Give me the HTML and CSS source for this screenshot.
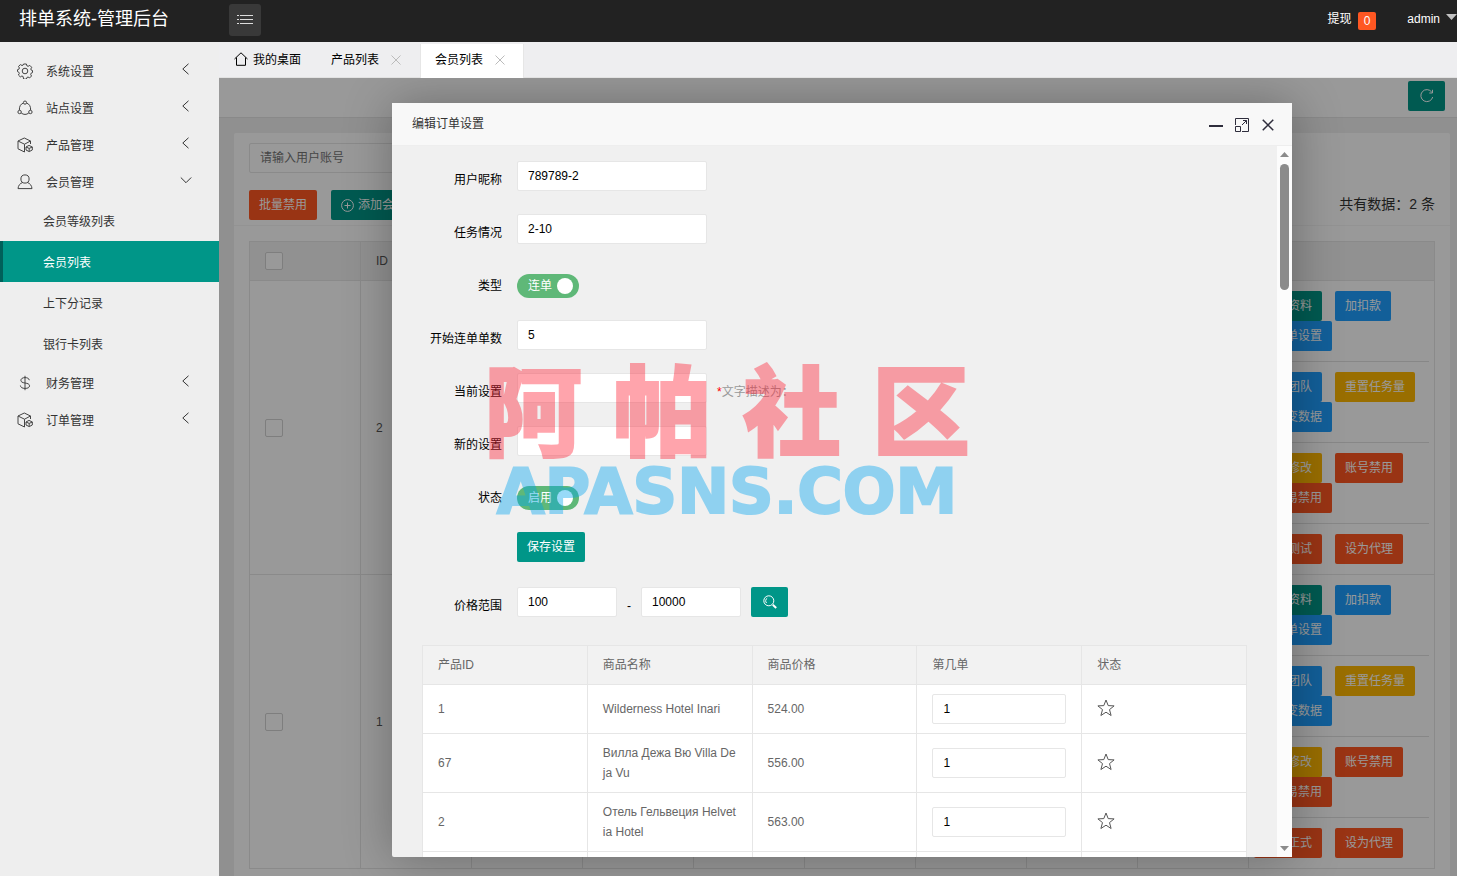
FILE: index.html
```html
<!DOCTYPE html>
<html lang="zh-CN">
<head>
<meta charset="utf-8">
<title>排单系统-管理后台</title>
<link rel="stylesheet" href="styles.css">
</head>
<body>
<svg class="sprite" aria-hidden="true">
  <symbol id="i-gear" viewBox="0 0 16 16"><path d="M6.6 1h2.8l.5 1.8 1.2.5 1.7-.9 1.9 1.9-.9 1.7.4 1.1 1.3.4v2.1l-1.4.6-.4 1.2.8 1.6-1.8 1.9-1.7-.9-1.1.5-.5 1.6H6.6L6.100 13.500 4.900 13l-1.600.9-1.900-1.900.9-1.600-.5-1.200L.5 8.600V6.700l1.400-.5.5-1.200-.9-1.600L3.400 1.600 5 2.500l1.100-.4z"/><circle cx="8" cy="8" r="2.800"/></symbol>
  <symbol id="i-site" viewBox="0 0 16 16"><circle cx="8" cy="2.600" r="1.600"/><circle cx="2.600" cy="12" r="1.700"/><circle cx="13.400" cy="12" r="1.700"/><path d="M6.300 3.100C3.600 4 2.100 6.600 2.400 10.200M9.700 3.100c2.700.9 4.200 3.500 3.900 7.100M4.200 13c2.300 1.900 5.300 1.900 7.600 0"/></symbol>
  <symbol id="i-box" viewBox="0 0 16 16"><path d="M7.500 15 1 11.800V4L7.300 1 13.500 4v3M1 4l6.500 3.200L13.500 4M7.500 7.200V15M9 10l3-1.600 3.300 1.600v3L12.200 14.600 9 13zM9 10l3.200 1.400L15.300 10M12.200 11.400v3"/></symbol>
  <symbol id="i-user" viewBox="0 0 16 16"><circle cx="8" cy="5" r="4.100"/><path d="M5.600 8.500C3 9.400 1.200 11.600 1 14.600h14c-.2-3-2-5.200-4.600-6.100"/></symbol>
  <symbol id="i-dollar" viewBox="0 0 16 16"><path d="M12.300 5.200C12 3.400 10.400 2.600 8 2.600S3.900 3.600 3.900 5.300 5.300 7.600 8 8s4.500 1 4.500 2.800S10.800 13.400 8 13.400s-4.400-1-4.600-2.900M8 .8v14.400"/></symbol>
  <symbol id="i-left" viewBox="0 0 12 12"><path d="M8.500.8 2.800 6l5.700 5.200"/></symbol>
  <symbol id="i-down" viewBox="0 0 12 12"><path d="M.8 3.500 6 8.700l5.200-5.200"/></symbol>
  <symbol id="i-x" viewBox="0 0 12 12"><path d="m1.500 1.500 9 9m0-9-9 9"/></symbol>
  <symbol id="i-star" viewBox="0 0 18 18"><path d="m9 1 2.200 5.600 5.900.3-4.600 3.700 1.600 5.900L9 13.200l-5.100 3.300 1.600-5.900L.9 6.900l5.900-.3z"/></symbol>
</svg>

<header class="topbar">
  <h1 class="brand">排单系统-管理后台</h1>
  <button class="menu-toggle" type="button" aria-label="菜单">
    <svg width="16" height="12" viewBox="0 0 16 12"><path d="M0 1.500h2M3 1.500h13M0 5.500h2M3 5.500h13M0 9.500h2M3 9.500h13"/></svg>
  </button>
  <div class="top-right">
    <a class="top-link" href="#">提现 <span class="badge">0</span></a>
    <a class="top-link user" href="#">admin <span class="caret"></span></a>
  </div>
</header>

<div class="shell">
  <nav class="sidebar">
    <a class="nav-item" href="#"><svg class="ico"><use href="#i-gear"/></svg><span>系统设置</span><svg class="arrow"><use href="#i-left"/></svg></a>
    <a class="nav-item" href="#"><svg class="ico"><use href="#i-site"/></svg><span>站点设置</span><svg class="arrow"><use href="#i-left"/></svg></a>
    <a class="nav-item" href="#"><svg class="ico"><use href="#i-box"/></svg><span>产品管理</span><svg class="arrow"><use href="#i-left"/></svg></a>
    <a class="nav-item" href="#"><svg class="ico"><use href="#i-user"/></svg><span>会员管理</span><svg class="arrow"><use href="#i-down"/></svg></a>
    <a class="sub-item" href="#">会员等级列表</a>
    <a class="sub-item active" href="#">会员列表</a>
    <a class="sub-item" href="#">上下分记录</a>
    <a class="sub-item" href="#">银行卡列表</a>
    <a class="nav-item" href="#"><svg class="ico"><use href="#i-dollar"/></svg><span>财务管理</span><svg class="arrow"><use href="#i-left"/></svg></a>
    <a class="nav-item" href="#"><svg class="ico"><use href="#i-box"/></svg><span>订单管理</span><svg class="arrow"><use href="#i-left"/></svg></a>
  </nav>

  <main class="main">
    <div class="tabs">
      <a class="tab" href="#"><svg class="home" viewBox="0 0 14 14"><path d="M.5 7 7 .8 13.500 7M2.500 5.500v7.800h9V5.500"/></svg>我的桌面</a>
      <a class="tab" href="#">产品列表<svg class="tab-x"><use href="#i-x"/></svg></a>
      <a class="tab current" href="#">会员列表<svg class="tab-x"><use href="#i-x"/></svg></a>
    </div>

    <div class="stage">
      <div class="page">
        <div class="crumbs">
          <button class="btn icon-btn" type="button" aria-label="刷新"><svg width="14" height="14" viewBox="0 0 14 14"><path d="M12.700 8A6 6 0 1 1 11.800 3.200M12.500.8v3.200H9.300"/></svg></button>
        </div>
        <div class="card">
          <div class="search"><input class="field" type="text" placeholder="请输入用户账号" aria-label="用户账号"></div>
          <div class="toolbar">
            <button class="btn red" type="button">批量禁用</button>
            <button class="btn add" type="button"><svg width="13" height="13" viewBox="0 0 13 13"><circle cx="6.500" cy="6.500" r="5.900"/><path d="M6.500 3.500v6M3.500 6.500h6"/></svg>添加会员</button>
            <span class="total">共有数据：2 条</span>
          </div>
          <div class="table-wrap">
            <table class="grid members">
              <colgroup><col span="9" class="c-data"><col class="c-ops"></colgroup>
              <thead><tr><th><input type="checkbox" aria-label="全选"></th><th>ID</th><th></th><th></th><th></th><th></th><th></th><th></th><th></th><th></th></tr></thead>
              <tbody>
                <tr><td><input type="checkbox" aria-label="选择 2"></td><td>2</td><td></td><td></td><td></td><td></td><td></td><td></td><td></td>
                  <td class="ops">
                    <div class="line"><button class="btn" type="button">基本资料</button><button class="btn blue" type="button">加扣款</button></div>
                    <div class="line second"><button class="btn blue" type="button">订单设置</button></div><hr>
                    <div class="line"><button class="btn blue" type="button">查看团队</button><button class="btn amber" type="button">重置任务量</button></div>
                    <div class="line second"><button class="btn blue" type="button">账变数据</button></div><hr>
                    <div class="line"><button class="btn amber" type="button">资料修改</button><button class="btn red" type="button">账号禁用</button></div>
                    <div class="line second"><button class="btn red" type="button">交易禁用</button></div><hr>
                    <div class="line"><button class="btn red" type="button">设为测试</button><button class="btn red" type="button">设为代理</button></div>
                  </td></tr>
                <tr><td><input type="checkbox" aria-label="选择 1"></td><td>1</td><td></td><td></td><td></td><td></td><td></td><td></td><td></td>
                  <td class="ops">
                    <div class="line"><button class="btn" type="button">基本资料</button><button class="btn blue" type="button">加扣款</button></div>
                    <div class="line second"><button class="btn blue" type="button">订单设置</button></div><hr>
                    <div class="line"><button class="btn blue" type="button">查看团队</button><button class="btn amber" type="button">重置任务量</button></div>
                    <div class="line second"><button class="btn blue" type="button">账变数据</button></div><hr>
                    <div class="line"><button class="btn amber" type="button">资料修改</button><button class="btn red" type="button">账号禁用</button></div>
                    <div class="line second"><button class="btn red" type="button">交易禁用</button></div><hr>
                    <div class="line"><button class="btn red" type="button">设为正式</button><button class="btn red" type="button">设为代理</button></div>
                  </td></tr>
              </tbody>
            </table>
          </div>
        </div>
      </div>

      <div class="shade"></div>

      <section class="dialog" role="dialog" aria-labelledby="dlg-title">
        <div class="dlg-head">
          <h2 id="dlg-title">编辑订单设置</h2>
          <button type="button" aria-label="最小化"><svg width="14" height="14" viewBox="0 0 14 14"><path class="bold" d="M0 8h14"/></svg></button>
          <button type="button" aria-label="最大化"><svg width="14" height="14" viewBox="0 0 14 14"><path d="M.5 7V.5h13v13H7M.5 8.500h5v5h-5zM7 7l4.500-4.500M8 2.500h3.500V6"/></svg></button>
          <button type="button" aria-label="关闭"><svg class="close" width="14" height="14"><use href="#i-x"/></svg></button>
        </div>
        <div class="dlg-body">
          <div class="dlg-scroll">
            <form class="form">
              <div class="row"><label for="nick">用户昵称</label><input class="field" id="nick" type="text" value="789789-2"></div>
              <div class="row"><label for="task">任务情况</label><input class="field" id="task" type="text" value="2-10"></div>
              <div class="row"><label for="kind">类型</label><span class="switch"><input id="kind" type="checkbox" checked><span>连单</span></span></div>
              <div class="row"><label for="start">开始连单单数</label><input class="field" id="start" type="text" value="5"></div>
              <div class="row"><label for="cur">当前设置</label><input class="field" id="cur" type="text"><span class="hint"><b>*</b>文字描述为：</span></div>
              <div class="row"><label for="new">新的设置</label><input class="field" id="new" type="text"></div>
              <div class="row"><label for="state">状态</label><span class="switch"><input id="state" type="checkbox" checked><span>启用</span></span></div>
              <div class="row save"><button class="btn" type="button">保存设置</button></div>
              <div class="row"><label for="min">价格范围</label><input class="field short" id="min" type="text" value="100"><span class="dash">-</span><input class="field short" type="text" value="10000" aria-label="最高价格"><button class="btn icon-btn find" type="button" aria-label="搜索"><svg width="14" height="14" viewBox="0 0 14 14"><circle cx="5.800" cy="5.800" r="5"/><path d="M3.600 8A3 3 0 0 1 4.200 3.200"/><path class="handle" d="m9.800 9.800 3.400 3.200"/></svg></button></div>
            </form>
            <table class="grid goods">
              <thead><tr><th>产品ID</th><th>商品名称</th><th>商品价格</th><th>第几单</th><th>状态</th></tr></thead>
              <tbody>
                <tr><td>1</td><td>Wilderness Hotel Inari</td><td>524.00</td><td><input class="field" type="text" value="1" aria-label="第几单"></td><td><svg class="star"><use href="#i-star"/></svg></td></tr>
                <tr><td>67</td><td>Вилла Дежа Вю Villa Deja Vu</td><td>556.00</td><td><input class="field" type="text" value="1" aria-label="第几单"></td><td><svg class="star"><use href="#i-star"/></svg></td></tr>
                <tr><td>2</td><td>Отель Гельвеция Helvetia Hotel</td><td>563.00</td><td><input class="field" type="text" value="1" aria-label="第几单"></td><td><svg class="star"><use href="#i-star"/></svg></td></tr>
                <tr class="next"><td></td><td></td><td></td><td></td><td></td></tr>
              </tbody>
            </table>
          </div>
          <div class="scrollbar"><i class="up"></i><i class="thumb"></i><i class="down"></i></div>
        </div>
        <div class="watermark">
          <div class="wm-cn"><span>阿</span><span>帕</span><span>社</span><span>区</span></div>
          <div class="wm-en">APASNS.COM</div>
        </div>
      </section>
    </div>
  </main>
</div>
</body>
</html>
```
FILE: styles.css
```css
* { box-sizing: border-box; }
body {
  margin: 0;
  height: 100vh;
  display: flex;
  flex-direction: column;
  overflow: hidden;
  font: 12px/20px "Liberation Sans", "Noto Sans CJK SC", sans-serif;
  color: #000;
}
a { color: inherit; text-decoration: none; }
button, input { font: inherit; }
button { cursor: pointer; }
svg { fill: none; stroke: currentColor; stroke-width: 1; flex: none; }
.sprite { position: absolute; width: 0; height: 0; }

/* top bar */
.topbar {
  flex: none;
  height: 42px;
  display: flex;
  align-items: center;
  background: #222;
  color: #fff;
  overflow: hidden;
}
.brand { width: 229px; margin: 0; padding: 0 0 4px 19px; font-size: 18px; line-height: 26px; font-weight: 400; }
.menu-toggle {
  width: 32px; height: 32px; margin-bottom: 2px; padding: 0;
  display: flex; align-items: center; justify-content: center;
  border: 0; border-radius: 3px; background: #393939; color: #ddd;
}
.top-right { margin-left: auto; display: flex; gap: 31px; padding-bottom: 4px; }
.top-link { display: flex; align-items: center; gap: 6px; }
.badge { height: 18px; margin-top: 3px; padding: 0 6px; line-height: 18px; border-radius: 2px; background: #ff5722; }
.caret { width: 11px; height: 6px; background: #c2c2c2; clip-path: polygon(0 0, 100% 0, 50% 100%); margin-bottom: 4px; }

/* side menu */
.shell { flex: 1; min-height: 0; display: flex; }
.sidebar { flex: none; width: 219px; padding-top: 10px; background: #eee; color: #333; }
.nav-item { display: flex; align-items: center; height: 37px; padding: 2px 27px 0 17px; }
.ico { width: 16px; height: 16px; margin: 0 13px 2px 0; stroke: #444; }
.arrow { width: 12px; height: 12px; margin: 0 0 5px auto; }
.sub-item { display: block; height: 41px; padding: 2px 0 0 43px; line-height: 41px; }
.sub-item.active { padding-left: 40px; border-left: 3px solid #00605a; background: #009688; color: #fff; }

/* tabs */
.main { flex: 1; min-width: 0; display: flex; flex-direction: column; }
.tabs { flex: none; height: 36px; display: flex; background: #eeeef0; border-bottom: 1px solid #e2e2e2; }
.tab { display: flex; align-items: center; padding: 0 15px; }
.tab.current { margin: 2px 0 -1px 3px; padding: 0 17px 2px 14px; background: #fff; border: 1px solid #e6e6e6; border-width: 0 1px; }
.home { width: 14px; height: 14px; margin: 0 5px 2px 0; }
.tab-x { width: 12px; height: 12px; margin-left: 11px; stroke: #bbb; }

/* member page */
.stage { flex: 1; min-height: 0; position: relative; overflow: hidden; background: #f1f1f1; }
.crumbs { height: 40px; padding: 3px 12px 0 0; display: flex; justify-content: flex-end; background: #fff; border-bottom: 1px solid #e5e5e5; }
.card { margin: 15px 7px 15px 15px; background: #fff; border-radius: 2px; }
.search { padding: 10px 15px 17px; }
.search .field { display: block; }
.field {
  width: 190px; height: 30px; padding: 0 10px;
  border: 1px solid #e6e6e6; border-radius: 2px; background: #fff; color: #000;
}
.field::placeholder { color: #757575; }
.toolbar { display: flex; align-items: center; gap: 14px; padding: 0 15px 5px; border-bottom: 1px solid #f6f6f6; }
.total { margin: 0 0 2px auto; font-size: 14px; color: #333; }
.btn {
  height: 30px; padding: 0 10px; line-height: 30px;
  border: 0; border-radius: 2px; background: #009688; color: #fff; white-space: nowrap;
}
.btn.red { background: #ff5722; }
.btn.blue { background: #1e9fff; }
.btn.amber { background: #ffb800; }
.btn.add { display: flex; align-items: center; gap: 4px; }
.icon-btn { width: 37px; display: flex; align-items: center; justify-content: center; }
.table-wrap { padding: 15px 15px 30px; }

.grid { width: 100%; table-layout: fixed; border-collapse: collapse; background: #fff; color: #666; word-break: break-all; }
.grid th, .grid td { padding: 9px 15px; border: 1px solid #e6e6e6; text-align: left; font-weight: 400; }
.grid th { background: #f2f2f2; }
.members { color: #555; }
.members th { height: 39px; }
.members td { height: 294px; }
.members input {
  appearance: none; display: block; width: 18px; height: 18px; margin: 0;
  border: 1px solid #d2d2d2; border-radius: 2px; background: #fff;
}
.c-data { width: 111px; }
.grid .ops { padding: 10px 5px; vertical-align: top; }
.line { display: flex; gap: 13px; }
.line.second { padding-left: 10px; }
.ops hr { height: 1px; margin: 10px 0; border: 0; background: #e2e2e2; }

/* dialog */
.shade { position: absolute; inset: 0; background: rgba(0, 0, 0, 0.4); }
.dialog {
  position: absolute; inset: 25px 165px 19px 173px;
  display: flex; flex-direction: column;
  border-radius: 2px; background: #f0f0f0;
  box-shadow: 1px 1px 50px rgba(0, 0, 0, 0.3);
}
.dlg-head {
  flex: none; height: 43px; padding: 0 17px 0 20px;
  display: flex; align-items: center; gap: 12px;
  background: #f8f8f8; border-bottom: 1px solid #eee; color: #333;
}
.dlg-head h2 { margin: 0 auto 0 0; font-size: 12px; font-weight: 400; }
.dlg-head button { display: flex; padding: 2px 0 0; border: 0; background: none; color: #2e2d3c; }
.bold { stroke-width: 2; }
.close { stroke-width: 1.3; }
.dlg-body { flex: 1; min-height: 0; display: flex; }
.dlg-scroll { flex: 1; min-width: 0; overflow: hidden; padding: 15px 30px 0; }
.form { display: flex; flex-direction: column; gap: 15px; margin-bottom: 20px; }
.row { display: flex; height: 38px; }
.row label { width: 80px; margin-right: 15px; padding: 9px 0; text-align: right; white-space: nowrap; direction: rtl; }
.row.save { padding-left: 95px; height: 40px; }
.field.short { width: 100px; }
.hint { padding: 9px 10px; color: #999; }
.hint b { font-weight: 400; color: #f00; }
.dash { width: 24px; padding: 9px 0; text-align: center; }
.find { margin-left: 10px; }
.handle { stroke-width: 2; }
.switch { position: relative; display: flex; align-items: center; height: 24px; margin-top: 7px; }
.switch input { appearance: none; width: 62px; height: 24px; margin: 0; border-radius: 12px; background: #5fb878; }
.switch input::after { content: ""; display: block; width: 16px; height: 16px; margin: 4px 6px 0 auto; border-radius: 50%; background: #fff; }
.switch span { position: absolute; left: 11px; color: #fff; pointer-events: none; }
.goods .field { display: block; width: 100%; }
.star { display: block; width: 18px; height: 18px; margin: 0 0 2px; stroke: #555; }
.next td { height: 49px; }

.scrollbar { flex: none; width: 15px; padding: 6px 3px; display: flex; flex-direction: column; align-items: center; background: #fcfcfc; }
.scrollbar .up, .scrollbar .down { width: 9px; height: 5px; background: #8b8b8b; }
.up { clip-path: polygon(50% 0, 100% 100%, 0 100%); }
.down { clip-path: polygon(0 0, 100% 0, 50% 100%); margin-top: auto; }
.thumb { width: 9px; height: 126px; margin-top: 7px; border-radius: 5px; background: #8b8b8b; }

/* site watermark laid over the dialog */
.watermark { position: absolute; left: 92px; top: 252px; width: 486px; pointer-events: none; opacity: 0.4; }
.wm-cn {
  display: flex; justify-content: space-between;
  font: 900 98px/100px "Noto Sans CJK SC", sans-serif;
  color: #ff1e32; -webkit-text-stroke: 2px #ff1e32;
}
.wm-en {
  display: flex; justify-content: center; margin-top: 12px;
  font: 700 62px/50px "DejaVu Sans", sans-serif;
  color: #00a5f0; -webkit-text-stroke: 2px #00a5f0;
}
```
